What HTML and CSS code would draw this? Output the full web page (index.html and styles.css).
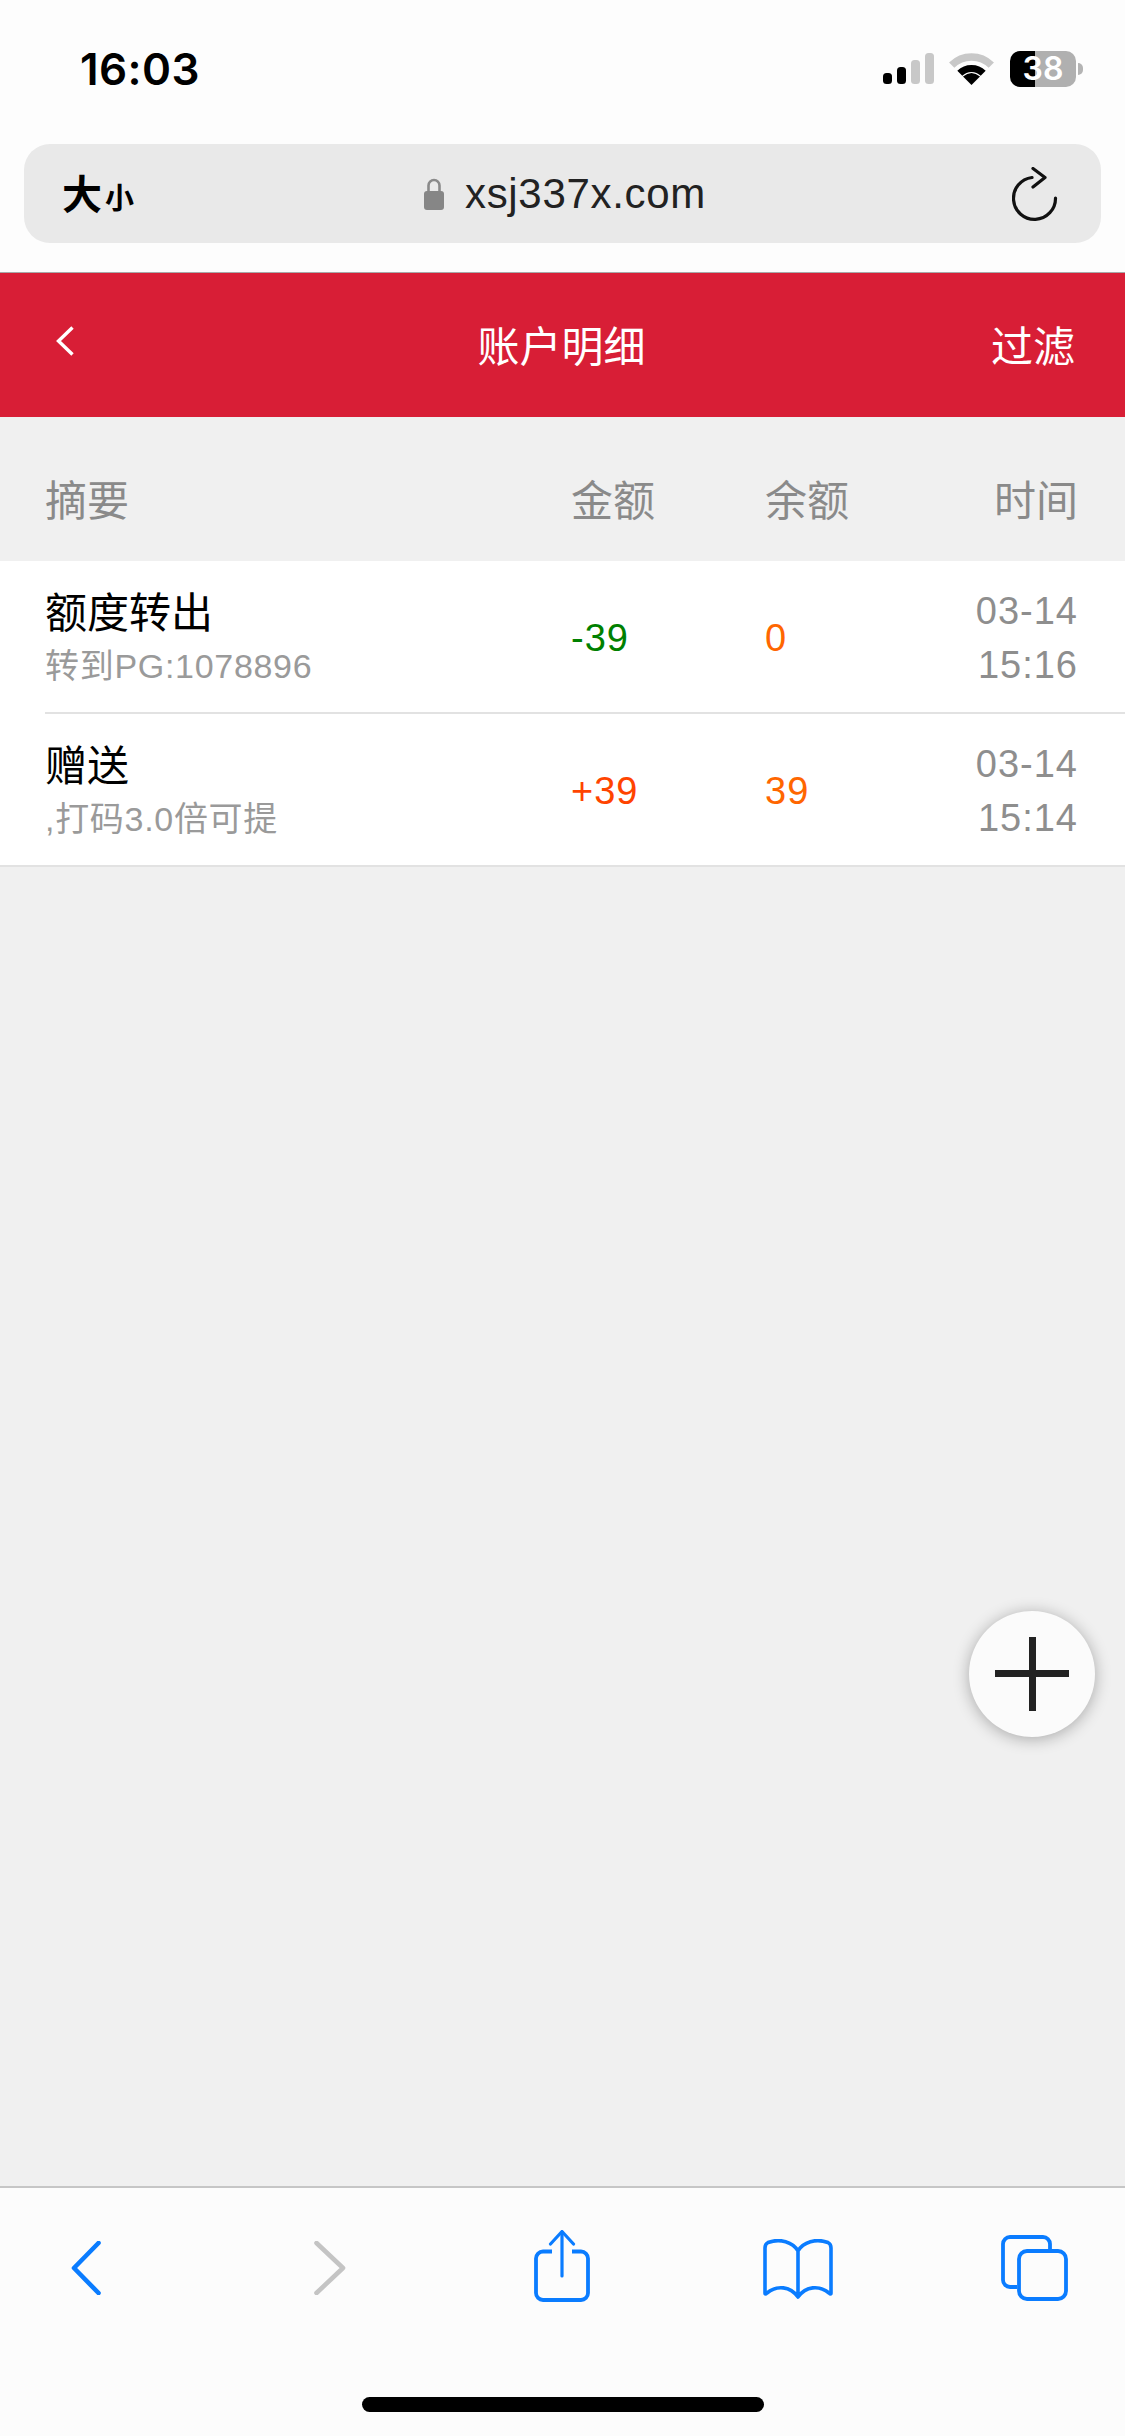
FILE: index.html
```html
<!DOCTYPE html>
<html lang="zh">
<head>
<meta charset="utf-8">
<title>账户明细</title>
<link rel="stylesheet" href="styles.css">
</head>
<body>
<div class="screen">
  <div class="chrome-top">
    <div class="status">
      <span class="clock">16:03</span>
      <div class="status-icons">
        <svg class="signal" width="51" height="31" viewBox="0 0 51 31"><rect x="0" y="20" width="9" height="11" rx="3.5" fill="#000"/><rect x="14" y="14" width="9" height="17" rx="3.5" fill="#000"/><rect x="28" y="7" width="9" height="24" rx="3.5" fill="#c8c8c8"/><rect x="42" y="0" width="9" height="31" rx="3.5" fill="#c8c8c8"/></svg>
        <svg class="wifi" width="45" height="33" viewBox="0 0 45 33"><path d="M2.7 13.2A28 28 0 0 1 42.3 13.2" fill="none" stroke="#c8c8c8" stroke-width="7.5"/><path d="M10.8 21.3A16.5 16.5 0 0 1 34.2 21.3" fill="none" stroke="#000" stroke-width="7"/><path d="M22.5 33L14 24.6Q22.5 17.6 31 24.6Z" fill="#000"/></svg>
        <div class="battery"><span class="battery-num">38</span></div>
        <span class="battery-cap"></span>
      </div>
    </div>
    <div class="urlbar">
      <span class="size-btn"><span class="big">大</span><span class="small">小</span></span>
      <span class="address">
        <svg class="lock" width="20" height="32" viewBox="0 0 20 32"><path d="M4.5 14V7.5a5.5 5.5 0 0 1 11 0V14" fill="none" stroke="#8a8a8a" stroke-width="2.6"/><rect x="0" y="13" width="20" height="19" rx="3" fill="#868686"/></svg>
        <span class="domain">xsj337x.com</span>
      </span>
      <svg class="reload" width="46" height="54" viewBox="0 0 46 54"><path d="M20 10.500A21 21 0 1 0 43.500 31" fill="none" stroke="#111" stroke-width="3.2" stroke-linecap="round"/><path d="M21 1.500L33 10.500L21 20" fill="none" stroke="#111" stroke-width="3.2" stroke-linecap="round" stroke-linejoin="round"/></svg>
    </div>
  </div>

  <header class="navbar">
    <svg class="nav-back" width="18" height="30" viewBox="0 0 18 30"><path d="M16.5 1.5L2.5 15L16.5 28.5" fill="none" stroke="#fff" stroke-width="3.4"/></svg>
    <h1 class="nav-title">账户明细</h1>
    <span class="nav-action">过滤</span>
  </header>

  <div class="grid table-head">
    <span>摘要</span><span>金额</span><span>余额</span><span class="right">时间</span>
  </div>

  <div class="rows">
    <div class="grid row">
      <div class="summary"><div class="title">额度转出</div><div class="note">转到PG:1078896</div></div>
      <div class="num minus">-39</div>
      <div class="num balance">0</div>
      <div class="time">03-14<br>15:16</div>
    </div>
    <div class="grid row">
      <div class="summary"><div class="title">赠送</div><div class="note">,打码3.0倍可提</div></div>
      <div class="num plus">+39</div>
      <div class="num balance">39</div>
      <div class="time">03-14<br>15:14</div>
    </div>
  </div>

  <div class="filler"></div>

  <footer class="toolbar">
    <div class="tools">
      <svg width="30" height="54" viewBox="0 0 30 54"><path d="M27.5 2L3 27L27.5 52" fill="none" stroke="#0a7cff" stroke-width="4.6" stroke-linecap="round" stroke-linejoin="round"/></svg>
      <svg width="32" height="54" viewBox="0 0 32 54"><path d="M2.5 2L29 27L2.5 52" fill="none" stroke="#c4c4c4" stroke-width="4.6" stroke-linecap="round" stroke-linejoin="round"/></svg>
      <svg width="56" height="72" viewBox="0 0 56 72"><path d="M18 21.5H9A7 7 0 0 0 2 28.500V63A7 7 0 0 0 9 70H47A7 7 0 0 0 54 63V28.500A7 7 0 0 0 47 21.500H38" fill="none" stroke="#0a7cff" stroke-width="3.8"/><path d="M28 2V46" fill="none" stroke="#0a7cff" stroke-width="3.2" stroke-linecap="round"/><path d="M16.500 14L28 1.500L39.500 14" fill="none" stroke="#0a7cff" stroke-width="3.2" stroke-linecap="round" stroke-linejoin="round"/></svg>
      <svg width="70" height="60" viewBox="0 0 70 60"><path d="M35 12C30 3 17 -1 5 3.500Q2 5 2 9V54Q2 56 4 54C14 46 27 47 35 58C43 47 56 46 66 54Q68 56 68 54V9Q68 5 65 3.500C53 -1 40 3 35 12V58" fill="none" stroke="#0a7cff" stroke-width="3.6" stroke-linejoin="round"/></svg>
      <svg width="67" height="66" viewBox="0 0 67 66"><path d="M16 52H9A7 7 0 0 1 2 45V9A7 7 0 0 1 9 2H42A7 7 0 0 1 49 9V15" fill="none" stroke="#0a7cff" stroke-width="3.8"/><rect x="18" y="16" width="47" height="48" rx="8" fill="none" stroke="#0a7cff" stroke-width="3.8"/></svg>
    </div>
    <div class="home-indicator"></div>
  </footer>

  <button class="fab" type="button" aria-label="add"><span class="fab-h"></span><span class="fab-v"></span></button>
</div>
</body>
</html>
```
FILE: styles.css
```css
* { box-sizing: border-box; }
html, body { margin: 0; padding: 0; }
body { font-family: "Liberation Sans", "Noto Sans CJK SC", sans-serif; background: #f0f0f0; }
.screen { position: relative; width: 1125px; height: 2436px; display: flex; flex-direction: column; overflow: hidden; }

.chrome-top { height: 273px; background: #fdfdfd; border-bottom: 1px solid #a8a8a8; padding: 0 24px; }
.status { height: 144px; display: flex; justify-content: space-between; align-items: flex-start; padding: 51px 18px 0 56px; }
.clock { font: 600 44px/36px Inter, sans-serif; color: #000; letter-spacing: 0.4px; }
.status-icons { display: flex; align-items: flex-start; }
.signal { margin-top: 2px; }
.wifi { margin: 1px 16px 0 15px; }
.battery { width: 66px; height: 36px; border-radius: 10px; background: linear-gradient(to right, #000 25px, #b0b0b0 25px); text-align: center; }
.battery-num { font: 600 32px/36px Inter, sans-serif; color: #fff; }
.battery-cap { width: 5px; height: 12px; margin: 12px 0 0 2px; background: #b4b4b4; border-radius: 0 6px 6px 0; }

.urlbar { height: 99px; background: #e9e9e9; border-radius: 26px; display: grid; grid-template-columns: 1fr auto 1fr; align-items: center; padding: 0 43px 0 38px; }
.size-btn { display: flex; align-items: baseline; font-family: "Noto Sans CJK SC", sans-serif; color: #000; font-weight: 700; }
.big { font-size: 40px; line-height: 50px; }
.small { font-size: 29px; line-height: 50px; margin-left: 3px; }
.address { display: flex; align-items: center; gap: 21px; padding-left: 10px; }
.lock { display: block; }
.domain { font: 400 42px/50px "Liberation Sans", sans-serif; color: #222; letter-spacing: 0.7px; }
.reload { justify-self: end; display: block; }

.navbar { height: 144px; background: #d81e36; color: #fff; display: grid; grid-template-columns: 1fr auto 1fr; align-items: start; padding: 53px 50px 0 56px; }
.nav-back { display: block; }
.nav-title { margin: -3px 8px 0 0; font: 400 42px/42px "Noto Sans CJK SC", sans-serif; }
.nav-action { justify-self: end; margin-top: -3px; font: 400 42px/42px "Noto Sans CJK SC", sans-serif; }

.grid { display: grid; grid-template-columns: 526px 194px 1fr auto; }
.table-head { height: 144px; padding: 18px 47px 0 45px; align-items: center; font: 400 42px/42px "Noto Sans CJK SC", sans-serif; color: #8a8a8a; }
.right { text-align: right; }

.rows { background: #fff; padding-left: 45px; }
.row { height: 153px; align-items: center; padding-right: 47px; border-bottom: 2px solid #e2e2e2; }
.row:last-child { margin-left: -45px; padding-left: 45px; }
.title { font: 400 42px/54px "Noto Sans CJK SC", sans-serif; color: #000; margin-top: -3px; }
.note { font: 400 34px/44px "Liberation Sans", "Noto Sans CJK SC", sans-serif; color: #9a9a9a; margin-top: 7px; letter-spacing: 0.7px; }
.num { font: 400 38px/44px "Liberation Sans", sans-serif; letter-spacing: 1px; padding-top: 2px; }
.minus { color: #008000; }
.plus { color: #ff4400; }
.balance { color: #ff6600; }
.time { font: 400 38px/54px "Liberation Sans", sans-serif; letter-spacing: 1px; color: #8e8e8e; text-align: right; padding-top: 2px; }

.filler { flex: 1; }

.toolbar { height: 250px; background: #fcfcfc; border-top: 2px solid #c6c6c6; display: flex; flex-direction: column; align-items: center; }
.tools { width: 100%; height: 209px; padding: 42px 0 0 71px; display: grid; grid-template-columns: 243px 220px 229px 238px auto; justify-content: start; align-items: start; }
.tools svg { display: block; }
.tools svg:nth-child(1), .tools svg:nth-child(2) { margin-top: 11px; }
.tools svg:nth-child(4) { margin-top: 9px; }
.tools svg:nth-child(5) { margin-top: 5px; }
.home-indicator { width: 402px; height: 15px; border-radius: 8px; background: #000; }

.fab { position: absolute; left: 969px; top: 1611px; width: 126px; height: 126px; border: 0; padding: 0; border-radius: 50%; background: #fbfbfb; box-shadow: 0 2px 16px rgba(0,0,0,.3); }
.fab-h { position: absolute; left: 26px; top: 59px; width: 74px; height: 7px; background: #222; }
.fab-v { position: absolute; left: 60px; top: 26px; width: 7px; height: 74px; background: #222; }
```
